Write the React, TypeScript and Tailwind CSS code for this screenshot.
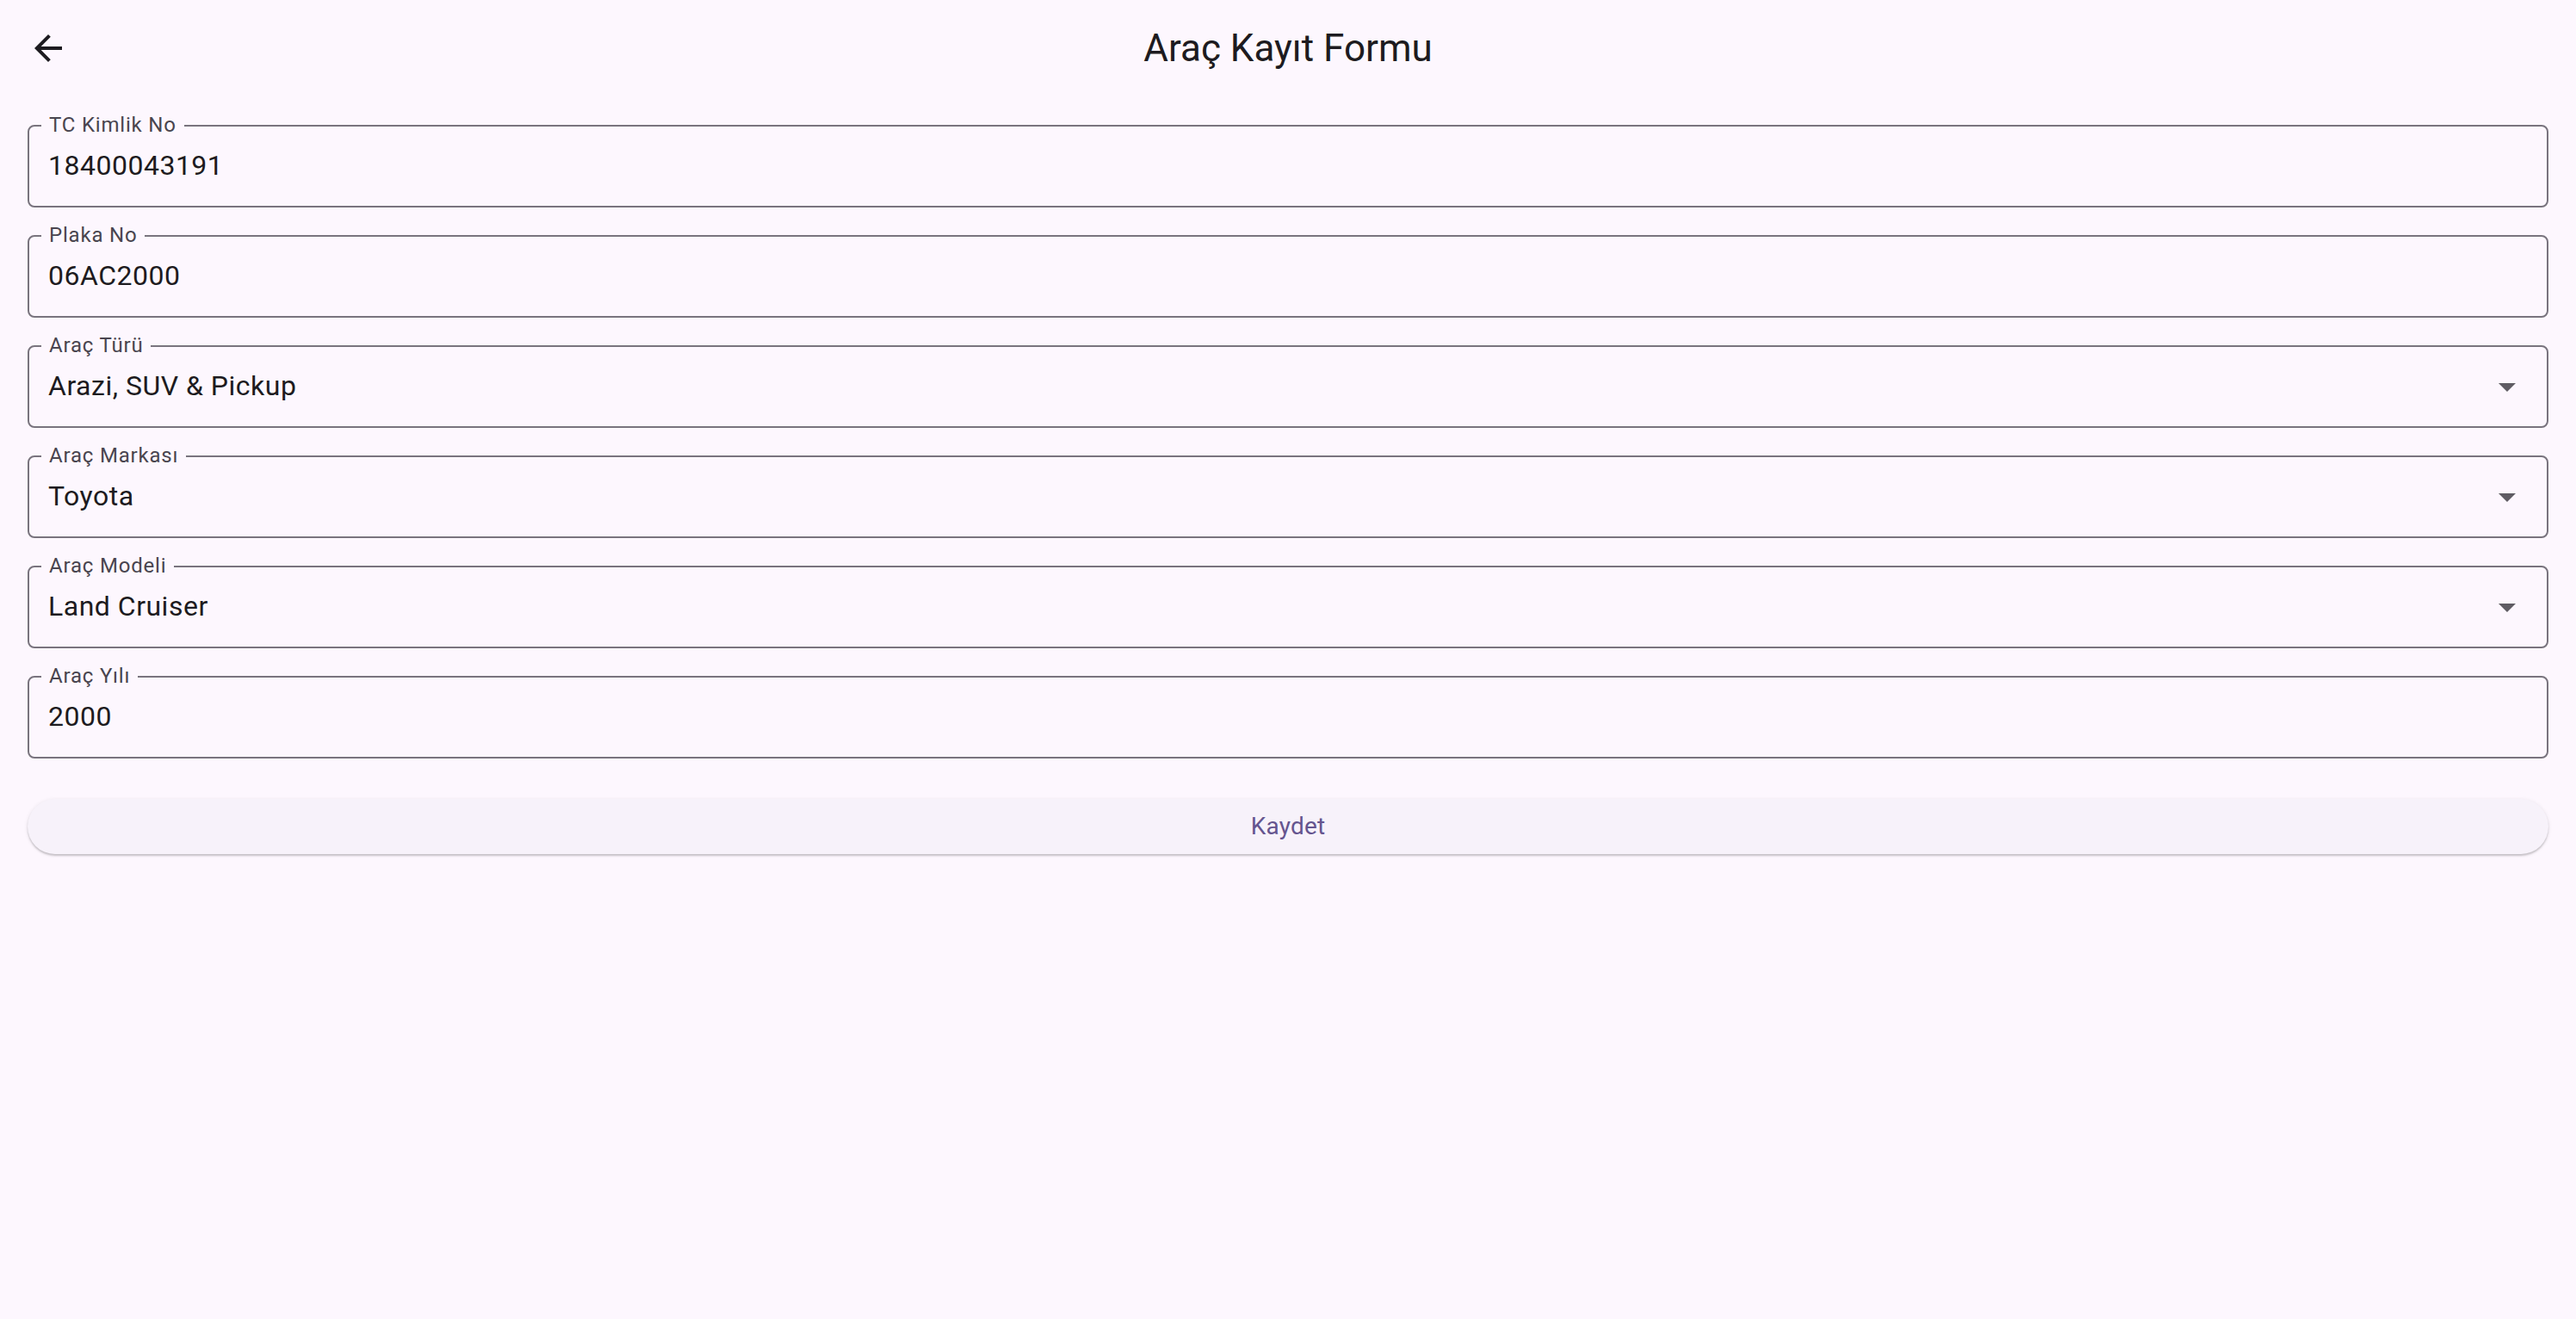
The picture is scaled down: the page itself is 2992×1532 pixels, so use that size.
import React from 'react'

type Field = {
  label: string
  value: string
  dropdown?: boolean
}

const fields: Field[] = [
  { label: 'TC Kimlik No', value: '18400043191' },
  { label: 'Plaka No', value: '06AC2000' },
  { label: 'Araç Türü', value: 'Arazi, SUV & Pickup', dropdown: true },
  { label: 'Araç Markası', value: 'Toyota', dropdown: true },
  { label: 'Araç Modeli', value: 'Land Cruiser', dropdown: true },
  { label: 'Araç Yılı', value: '2000' },
]

function BackArrow() {
  return (
    <svg width="48" height="48" viewBox="0 0 24 24" className="fill-[#1D1B20]">
      <path d="M20 11H7.83l5.59-5.59L12 4l-8 8 8 8 1.41-1.41L7.83 13H20v-2z" />
    </svg>
  )
}

function DropArrow() {
  return (
    <svg width="48" height="48" viewBox="0 0 24 24" className="fill-[#5F5C63]">
      <path d="M7 10l5 5 5-5z" />
    </svg>
  )
}

function OutlinedField({ field }: { field: Field }) {
  return (
    <div className="relative h-[96px] rounded-[8px] border-2 border-[#79747E] flex items-center pl-[22px] pr-[22px] pb-[3px]">
      <span className="absolute -top-[14px] left-[14px] px-[9px] bg-[#FDF7FE] text-[24px] leading-[24px] tracking-[0.8px] text-[#49454F]">
        {field.label}
      </span>
      <span className="flex-1 text-[32px] leading-[32px] tracking-[0.5px] text-[#1D1B20]">{field.value}</span>
      {field.dropdown && (
        <span className="flex items-center pt-[3px]">
          <DropArrow />
        </span>
      )}
    </div>
  )
}

export default function App() {
  return (
    <div className="min-h-screen bg-[#FDF7FE] font-['Roboto',_'Noto_Sans',_sans-serif]">
      <header className="h-[112px] grid grid-cols-[1fr_auto_1fr] items-center px-[32px]">
        <div className="flex items-center">
          <BackArrow />
        </div>
        <h1 className="text-[44px] leading-[44px] text-[#1D1B20]">Araç Kayıt Formu</h1>
        <div />
      </header>

      <main className="px-[32px] pt-[33px]">
        <div className="flex flex-col gap-[32px]">
          {fields.map((f) => (
            <OutlinedField key={f.label} field={f} />
          ))}
        </div>

        <button className="mt-[47px] w-full h-[64px] rounded-full bg-[#F7F2FA] text-[28px] leading-[28px] tracking-[0.2px] text-[#65558F] shadow-[0_2px_2px_rgba(0,0,0,0.18),0_1px_4px_1px_rgba(0,0,0,0.06)]">
          Kaydet
        </button>
      </main>
    </div>
  )
}
